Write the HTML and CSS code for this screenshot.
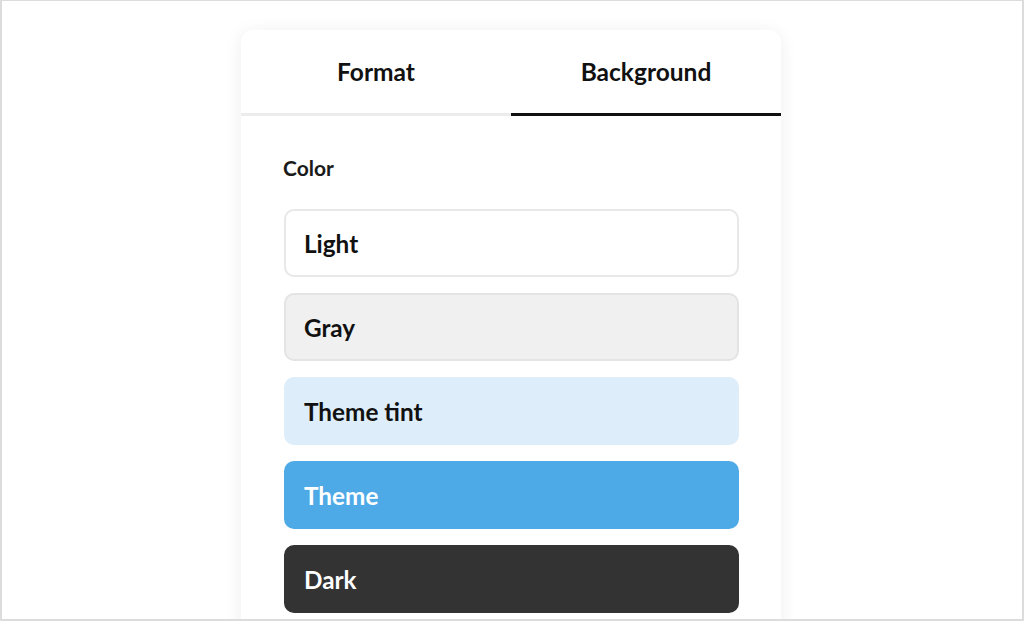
FILE: index.html
```html
<!DOCTYPE html>
<html>
<head>
<meta charset="utf-8">
<link rel="stylesheet" href="styles.css">
</head>
<body>
<div class="frame">
  <div class="card">
    <div class="tabs">
      <div class="tab">Format</div>
      <div class="tab active">Background</div>
    </div>
    <div class="body">
      <div class="label">Color</div>
      <div class="options">
        <div class="opt light">Light</div>
        <div class="opt gray">Gray</div>
        <div class="opt tint">Theme tint</div>
        <div class="opt theme">Theme</div>
        <div class="opt dark">Dark</div>
      </div>
    </div>
  </div>
</div>
</body>
</html>
```

FILE: styles.css
```css
html, body {
  margin: 0;
  padding: 0;
  background: #fff;
}
.frame {
  box-sizing: border-box;
  width: 1024px;
  height: 621px;
  border: 2px solid #dcdcdc;
  border-top-width: 1px;
  overflow: hidden;
  display: flex;
  justify-content: flex-start;
  padding-top: 29px;
  padding-left: 239px;
  font-family: Lato, "Open Sans", sans-serif;
  color: #111;
}
.card {
  width: 540px;
  height: 640px;
  background: #fff;
  border-radius: 12px;
  box-shadow: 0 2px 18px rgba(0, 0, 0, 0.07);
}
.tabs {
  display: flex;
  border-bottom: 3px solid #ececec;
}
.tab {
  flex: 1;
  text-align: center;
  font-size: 24.5px;
  font-weight: 700;
  height: 83px;
  line-height: 84px;
  margin-bottom: -3px;
  border-bottom: 3px solid transparent;
}
.tab.active {
  border-bottom-color: #111;
}
.body {
  padding: 39px 42px 0 43px;
}
.label {
  font-size: 21px;
  font-weight: 700;
  line-height: 26px;
  margin-bottom: 28px;
  margin-left: -1px;
  color: #1a1a1a;
}
.options {
  display: flex;
  flex-direction: column;
  gap: 16px;
}
.opt {
  box-sizing: border-box;
  height: 68px;
  border-radius: 10px;
  padding-left: 18px;
  display: flex;
  align-items: center;
  font-size: 24.3px;
  font-weight: 700;
  border: 2px solid transparent;
}
.light {
  background: #fff;
  border-color: #e8e8e8;
}
.gray {
  background: #f0f0f0;
  border-color: #e4e4e4;
}
.tint {
  background: #ddedf9;
  border-color: #ddedf9;
}
.theme {
  background: #4eaae6;
  border-color: #4eaae6;
  color: #fff;
}
.dark {
  background: #333;
  border-color: #333;
  color: #fff;
}
```
